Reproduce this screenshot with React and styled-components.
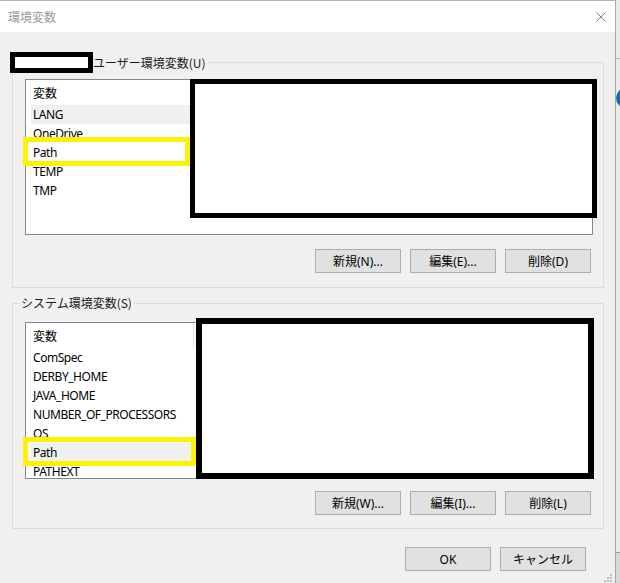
import React from 'react';
import styled, { createGlobalStyle } from 'styled-components';

const GlobalStyle = createGlobalStyle`
  html, body {
    margin: 0;
    padding: 0;
    background: #ececec;
  }
  body {
    font-family: "Noto Sans", "Noto Sans CJK JP", sans-serif;
    font-size: 12px;
    color: #000;
  }
`;

const userVars = ['LANG', 'OneDrive', 'Path', 'TEMP', 'TMP'];
const systemVars = [
	'ComSpec',
	'DERBY_HOME',
	'JAVA_HOME',
	'NUMBER_OF_PROCESSORS',
	'OS',
	'Path',
	'PATHEXT',
];

export default function App() {
	return (
		<Screen>
			<GlobalStyle />
			<Window>
				<TitleBar>
					<Title>環境変数</Title>
					<svg width="10" height="10" viewBox="0 0 10 10">
						<path d="M0.5 0.5 L9.5 9.5 M9.5 0.5 L0.5 9.5" stroke="#808080" strokeWidth="1" fill="none" />
					</svg>
				</TitleBar>
				<Body>
					<GroupBox $top={6} $bottom={14}>
						<Legend $offset={-15}>
							<LegendMask />
							ユーザー環境変数(U)
						</Legend>
						<ListArea>
							<ListBox $height={156}>
								<HeaderRow>
									<HeaderCell $width={163}>変数</HeaderCell>
								</HeaderRow>
								{userVars.map((name) => (
									<Row key={name} $selected={name === 'LANG'}>{name}</Row>
								))}
							</ListBox>
							<Redaction $left={165} $top={0} $width={407} $height={139} $thick={5} />
							<Highlight $left={-2} $top={58} $width={167} />
						</ListArea>
						<ButtonRow $gap={14}>
							<Button>新規(N)...</Button>
							<Button>編集(E)...</Button>
							<Button>削除(D)</Button>
						</ButtonRow>
					</GroupBox>

					<GroupBox $top={11} $bottom={13} $spaced>
						<Legend $offset={-6} $plain>システム環境変数(S)</Legend>
						<ListArea>
							<ListBox $height={157}>
								<HeaderRow>
									<HeaderCell $width={163} $divider>変数</HeaderCell>
								</HeaderRow>
								{systemVars.map((name) => (
									<Row key={name} $selected={name === 'Path'}>{name}</Row>
								))}
							</ListBox>
							<Redaction $left={171} $top={-4} $width={398} $height={161} $thick={6} />
							<Highlight $left={-2} $top={115} $width={173} />
						</ListArea>
						<ButtonRow $gap={12}>
							<Button>新規(W)...</Button>
							<Button>編集(I)...</Button>
							<Button>削除(L)</Button>
						</ButtonRow>
					</GroupBox>

					<Footer>
						<Button>OK</Button>
						<Button>キャンセル</Button>
					</Footer>
				</Body>
				<Grip width="10" height="9" viewBox="0 0 10 9">
					<rect x="7" y="0" width="2" height="2" fill="#bdbdbd" />
					<rect x="4" y="3" width="2" height="2" fill="#bdbdbd" />
					<rect x="7" y="3" width="2" height="2" fill="#bdbdbd" />
					<rect x="1" y="6" width="2" height="2" fill="#bdbdbd" />
					<rect x="4" y="6" width="2" height="2" fill="#bdbdbd" />
					<rect x="7" y="6" width="2" height="2" fill="#bdbdbd" />
				</Grip>
			</Window>
			<Backdrop>
				<BackdropTop />
				<svg width="4" height="20" viewBox="0 0 4 20">
					<circle cx="10" cy="10" r="10" fill="#1668b8" />
				</svg>
				<BackdropRest />
			</Backdrop>
		</Screen>
	);
}

const Screen = styled.div`
	display: flex;
	width: 620px;
	height: 583px;
	overflow: hidden;
`;

const Window = styled.div`
	position: relative;
	flex: none;
	width: 615px;
	height: 583px;
	display: flex;
	flex-direction: column;
	background: #f0f0f0;
	border-right: 1px solid #a8a8a8;
`;

const TitleBar = styled.div`
	flex: none;
	height: 31px;
	border-top: 1px solid #b4b4b4;
	background: #fff;
	display: flex;
	align-items: center;
	justify-content: space-between;
	padding: 0 9px 0 8px;
`;

const Title = styled.span`
	font-family: "Noto Sans CJK JP", sans-serif;
	font-size: 12px;
	color: #9a9a9a;
`;

const Body = styled.div`
	flex: 1;
	display: flex;
	flex-direction: column;
	padding: 20px 11px 0 12px;
`;

const GroupBox = styled.fieldset`
	margin: ${(p) => (p.$spaced ? '7px' : '0')} 0 0 0;
	min-width: 0;
	border: 1px solid #dcdcdc;
	padding: ${(p) => p.$top}px 10px ${(p) => p.$bottom}px 12px;
`;

const Legend = styled.legend`
	display: flex;
	align-items: center;
	margin-left: ${(p) => p.$offset}px;
	padding: ${(p) => (p.$plain ? '0 2px' : '0 2px 0 0')};
	line-height: 16px;
	font-family: "Noto Sans CJK JP", sans-serif;
	font-size: 12px;
	color: #1a1a1a;
`;

const LegendMask = styled.span`
	box-sizing: border-box;
	width: 83px;
	height: 21px;
	border: 5px solid #000;
	background: #fff;
`;

const ListArea = styled.div`
	position: relative;
`;

const ListBox = styled.div`
	box-sizing: border-box;
	height: ${(p) => p.$height}px;
	border: 1px solid #828790;
	background: #fff;
	padding-left: 5px;
	overflow: hidden;
`;

const HeaderRow = styled.div`
	height: 25px;
	display: flex;
	align-items: stretch;
`;

const HeaderCell = styled.div`
	box-sizing: border-box;
	width: ${(p) => p.$width}px;
	display: flex;
	align-items: center;
	padding-left: 2px;
	font-family: "Noto Sans CJK JP", sans-serif;
	border-right: 1px solid ${(p) => (p.$divider ? '#e5e5e5' : 'transparent')};
`;

const Row = styled.div`
	height: 19px;
	line-height: 19px;
	padding-left: 2px;
	white-space: nowrap;
	font-size: 12px;
	letter-spacing: -0.45px;
	background: ${(p) => (p.$selected ? '#f0f0f0' : 'transparent')};
`;

const Redaction = styled.div`
	position: absolute;
	box-sizing: border-box;
	left: ${(p) => p.$left}px;
	top: ${(p) => p.$top}px;
	width: ${(p) => p.$width}px;
	height: ${(p) => p.$height}px;
	border: ${(p) => p.$thick}px solid #000;
	background: #fff;
`;

const Highlight = styled.div`
	position: absolute;
	box-sizing: border-box;
	left: ${(p) => p.$left}px;
	top: ${(p) => p.$top}px;
	width: ${(p) => p.$width}px;
	height: 29px;
	border: 5px solid #fff200;
`;

const ButtonRow = styled.div`
	display: flex;
	justify-content: flex-end;
	gap: 9px;
	margin-top: ${(p) => p.$gap}px;
	padding-right: 2px;
`;

const Button = styled.button`
	box-sizing: border-box;
	width: 86px;
	height: 24px;
	margin: 0;
	padding: 0;
	border: 1px solid #adadad;
	background: #e1e1e1;
	font-family: "Noto Sans", "Noto Sans CJK JP", sans-serif;
	font-size: 12px;
	color: #000;
`;

const Footer = styled.div`
	display: flex;
	justify-content: flex-end;
	gap: 9px;
	margin-top: 18px;
	padding-right: 18px;
`;

const Grip = styled.svg`
	position: absolute;
	right: 2px;
	bottom: 0;
`;

const Backdrop = styled.div`
	flex: 1;
	display: flex;
	flex-direction: column;
	background: #ebebeb;
`;

const BackdropTop = styled.div`
	height: 58px;
	border-bottom: 1px solid #b8b8b8;
	margin-bottom: 29px;
`;

const BackdropRest = styled.div`
	flex: 1;
	margin-top: 444px;
	border-top: 1px solid #9c9c9c;
	background: #d8d8d8;
`;
